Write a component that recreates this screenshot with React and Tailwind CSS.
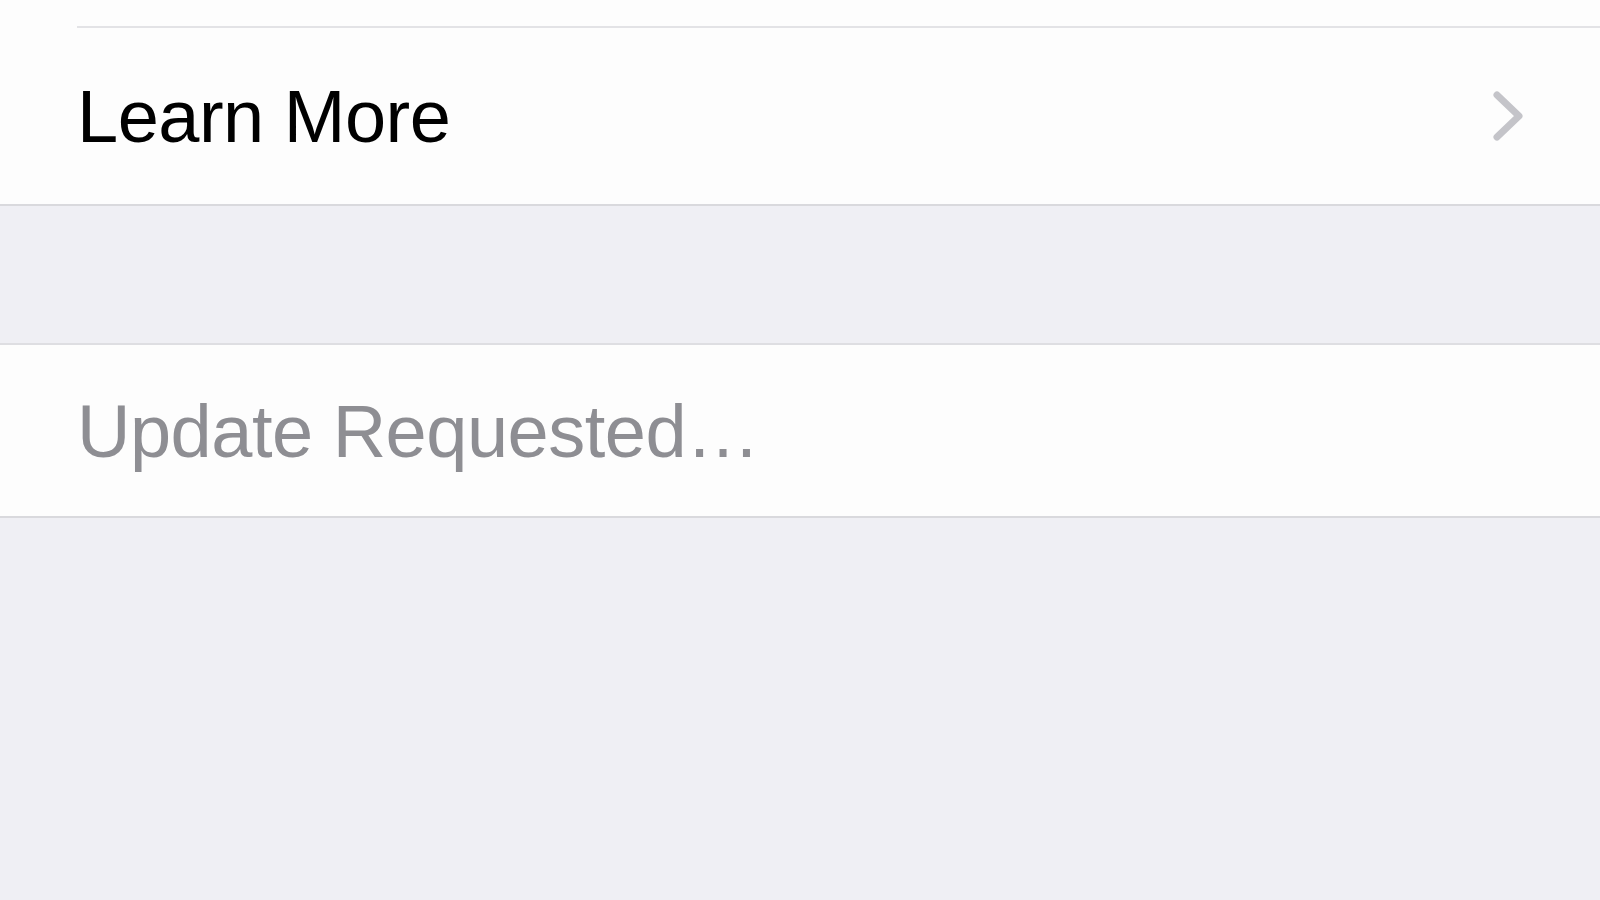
import React from "react";

export default function App() {
  return (
    <div className="w-[1600px] h-[900px] bg-[#efeff4] flex flex-col overflow-hidden" style={{ fontFamily: '"Liberation Sans", Arial, sans-serif' }}>
      <div className="bg-[#fdfdfd] flex flex-col">
        <div className="h-[26px]" />
        <div className="ml-[77px] h-[2px] bg-[#e3e3e6]" />
        <div className="h-[176px] flex items-center justify-between pl-[77px] pr-[74px]">
          <span className="text-[74px] leading-none text-black tracking-[-0.5px] pt-[2px]">Learn More</span>
          <svg width="36" height="54" viewBox="0 0 36 54">
            <path d="M7 6 L29 27 L7 48" fill="none" stroke="#c4c4c9" strokeWidth="7" strokeLinecap="round" strokeLinejoin="round" />
          </svg>
        </div>
      </div>
      <div className="h-[2px] bg-[#d9d9dd]" />
      <div className="h-[137px]" />
      <div className="h-[2px] bg-[#dedee2]" />
      <div className="bg-[#fdfdfd] h-[171px] flex items-center pl-[77px]">
        <span className="text-[74px] leading-none text-[#8e8e93] tracking-[-0.5px] pt-[2px]">Update Requested…</span>
      </div>
      <div className="h-[2px] bg-[#d9d9dd]" />
      <div className="flex-1" />
    </div>
  );
}
